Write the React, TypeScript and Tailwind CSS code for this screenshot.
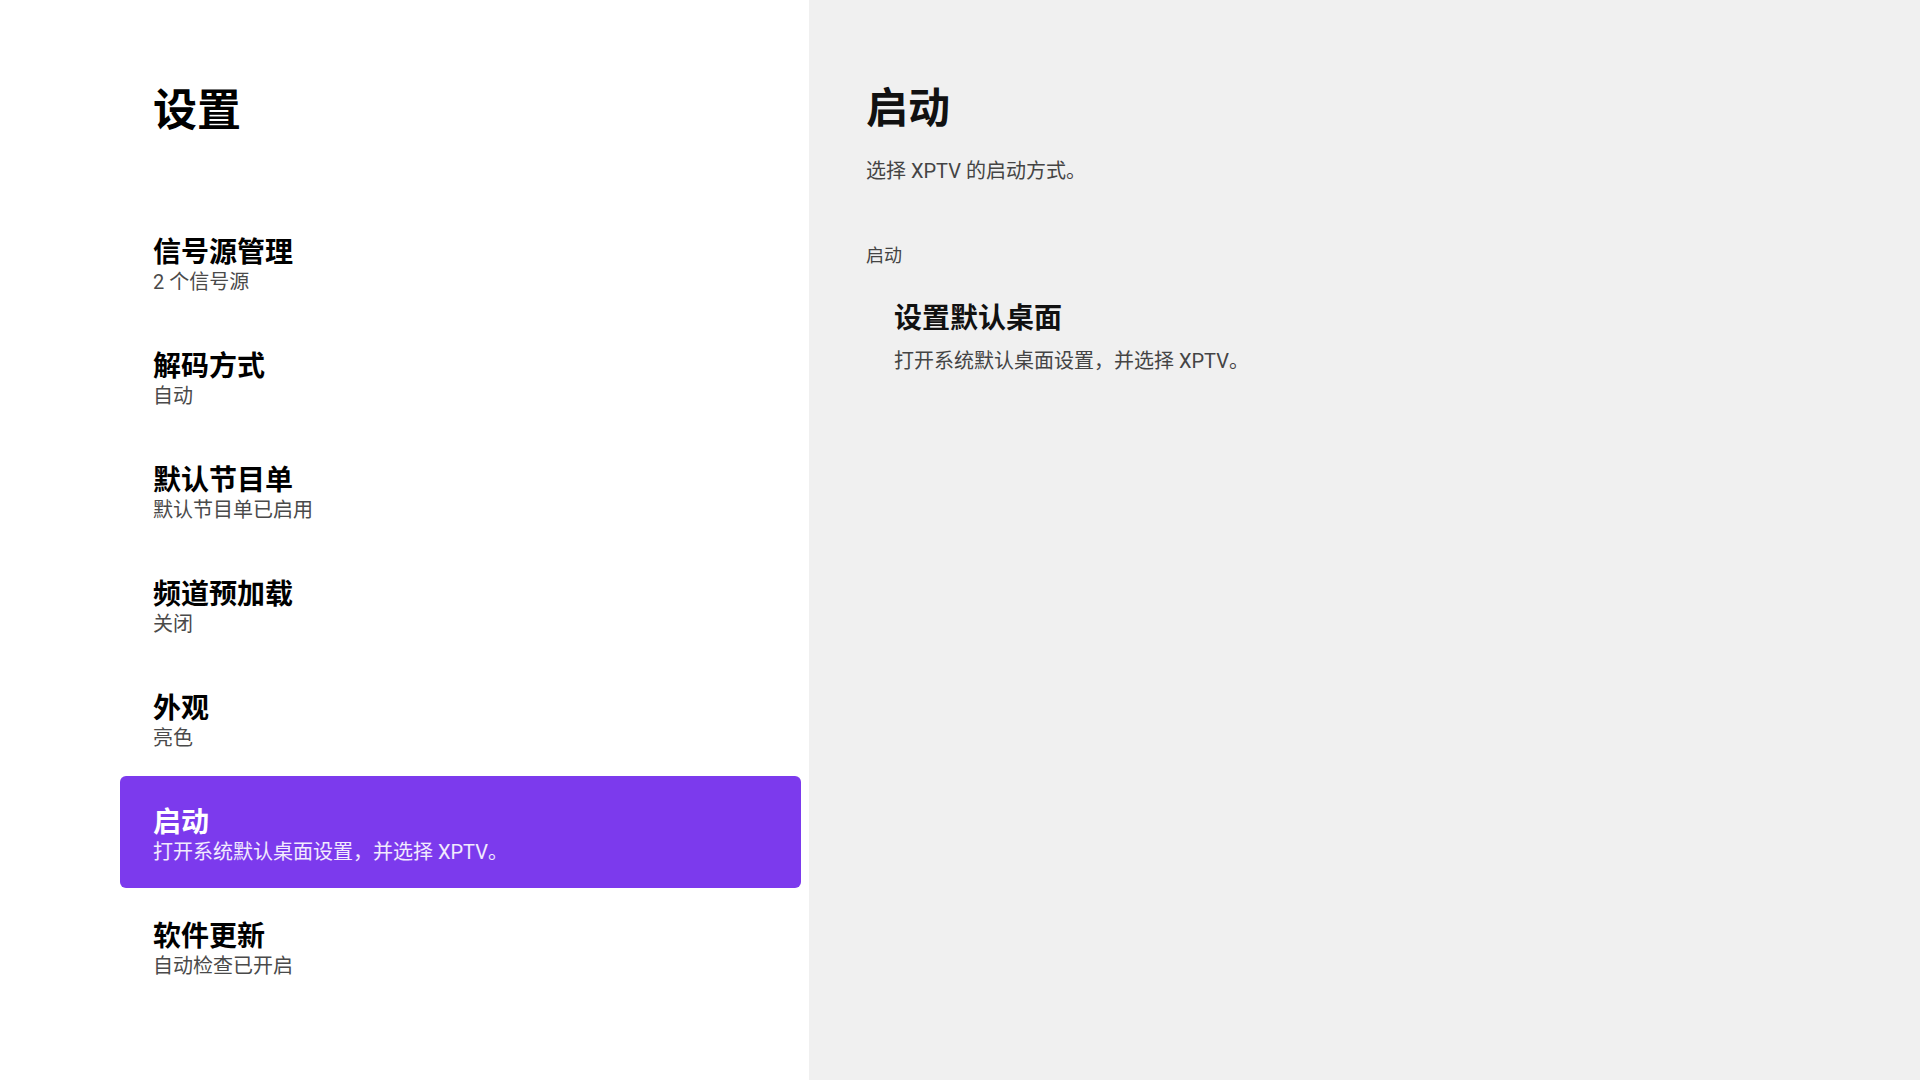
import { useState } from "react";

interface Item {
  title: string;
  sub: string;
}

const items: Item[] = [
  { title: "信号源管理", sub: "2 个信号源" },
  { title: "解码方式", sub: "自动" },
  { title: "默认节目单", sub: "默认节目单已启用" },
  { title: "频道预加载", sub: "关闭" },
  { title: "外观", sub: "亮色" },
  { title: "启动", sub: "打开系统默认桌面设置，并选择 XPTV。" },
  { title: "软件更新", sub: "自动检查已开启" },
];

export default function App() {
  const [active] = useState(5);

  return (
    <div
      className="flex h-[1080px] w-[1920px] overflow-hidden"
      style={{ fontFamily: 'Roboto, "Noto Sans CJK SC", "Noto Sans", sans-serif' }}
    >
      {/* left menu */}
      <div className="flex w-[809px] shrink-0 flex-col bg-white pl-[120px] pr-[8px]">
        <h1 className="mt-[89px] mb-[73px] pl-[33px] text-[44px] font-bold leading-[44px] text-black">
          设置
        </h1>
        <div className="flex flex-col gap-[2px]">
          {items.map((item, i) => (
            <div
              key={item.title}
              className={
                i === active
                  ? "h-[112px] rounded-[6px] bg-[#7c3aed] pl-[33px] pt-[31px] text-white"
                  : "h-[112px] rounded-[6px] pl-[33px] pt-[31px] text-black"
              }
            >
              <div className="text-[28px] font-bold leading-[32px]">{item.title}</div>
              <div
                className={
                  i === active
                    ? "mt-[1px] text-[20px] leading-[24px] text-white/90"
                    : "mt-[1px] text-[20px] leading-[24px] text-[#4a4a4a]"
                }
              >
                {item.sub}
              </div>
            </div>
          ))}
        </div>
      </div>

      {/* right detail */}
      <div className="flex flex-1 flex-col bg-[#f0f0f0] pl-[57px]">
        <h2 className="mt-[88px] text-[42px] font-bold leading-[42px] text-[#111]">启动</h2>
        <p className="mt-[31px] text-[20px] leading-[20px] text-[#444]">选择 XPTV 的启动方式。</p>
        <div className="mt-[66px] text-[18px] leading-[18px] text-[#444]">启动</div>
        <div className="ml-[28px] mt-[40px]">
          <div className="text-[28px] font-bold leading-[28px] text-[#111]">设置默认桌面</div>
          <div className="mt-[18px] text-[20px] leading-[20px] text-[#444]">
            打开系统默认桌面设置，并选择 XPTV。
          </div>
        </div>
      </div>
    </div>
  );
}
